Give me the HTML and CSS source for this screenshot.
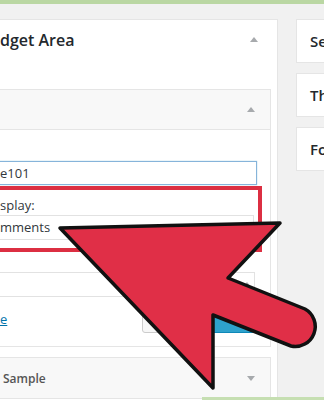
FILE: index.html
```html
<!DOCTYPE html>
<html>
<head>
<meta charset="utf-8">
<link rel="stylesheet" href="styles.css">
</head>
<body>
<div class="topbar"></div>
<div class="stage">
  <section class="area">
    <header class="area-head">
      <h2 class="area-title">dget Area</h2>
      <span class="caret caret-up"></span>
    </header>
    <div class="widget">
      <div class="widget-head">
        <span class="caret caret-up"></span>
      </div>
      <div class="widget-body">
        <div class="input">e101</div>
        <div class="highlight">
          <div class="label">splay:</div>
          <div class="select">mments</div>
        </div>
        <div class="field"><span class="caret caret-up"></span></div>
        <div class="actions">
          <a class="link" href="#">e</a>
          <div class="buttons">
            <span class="btn"></span>
            <span class="btn btn-primary"></span>
          </div>
        </div>
      </div>
    </div>
    <div class="widget">
      <div class="widget-head widget-head-closed">
        <h3 class="widget-title">Sample</h3>
        <span class="caret caret-down"></span>
      </div>
    </div>
  </section>
  <aside class="side">
    <div class="box"><h3 class="box-title">Search</h3></div>
    <div class="box"><h3 class="box-title">Theme</h3></div>
    <div class="box"><h3 class="box-title">Footer</h3></div>
  </aside>
</div>
<div class="greenbar"></div>
<svg class="arrow" width="324" height="400" viewBox="0 0 324 400">
  <path d="M60,228 L280,223 L228,278 L305,309 A20,20 0 0 1 291,346 L213,315 L213,388 Z" fill="#e02f47" stroke="#111" stroke-width="3.5" stroke-linejoin="round"/>
</svg>
</body>
</html>
```
FILE: styles.css
```css
html, body {
  margin: 0;
  padding: 0;
  overflow: hidden;
}
body {
  width: 324px;
  height: 400px;
  position: relative;
  background: #f1f1f1;
  font-family: "Open Sans", "DejaVu Sans", sans-serif;
  color: #23282d;
}
.topbar {
  height: 4px;
  background: #bad7a3;
}
.stage {
  display: flex;
  align-items: flex-start;
  gap: 18px;
  margin-left: -60px;
  padding-top: 15px;
}
.area {
  flex: none;
  width: 338px;
  min-height: 400px;
  box-sizing: border-box;
  background: #fff;
  border: 1px solid #e5e5e5;
}
.area-head {
  display: flex;
  justify-content: space-between;
  align-items: flex-start;
  height: 69px;
  box-sizing: border-box;
  padding: 0 19px 0 59px;
}
.area-title {
  margin: 9px 0 0;
  font-size: 16px;
  line-height: 22px;
  font-weight: 600;
}
.area-head .caret {
  margin-top: 17px;
}
.caret {
  display: block;
  width: 0;
  height: 0;
  border-left: 4px solid transparent;
  border-right: 4px solid transparent;
}
.caret-up {
  border-bottom: 5px solid #a7aaad;
}
.caret-down {
  border-top: 5px solid #a7aaad;
}
.widget {
  margin: 0 6px 0 9px;
  border: 1px solid #e5e5e5;
  background: #fff;
}
.widget + .widget {
  margin-top: 10px;
}
.widget-head {
  display: flex;
  justify-content: flex-end;
  align-items: center;
  height: 40px;
  box-sizing: border-box;
  padding-right: 15px;
  background: #f8f8f8;
  border-bottom: 1px solid #e5e5e5;
}
.widget-head-closed {
  justify-content: space-between;
  padding-left: 52px;
  border-bottom: 0;
}
.widget-title {
  margin: 0;
  font-size: 12px;
  font-weight: 600;
  color: #555;
}
.widget-body {
  padding: 31px 13px 13px 30px;
  font-size: 13px;
  color: #32373c;
}
.input {
  height: 24px;
  box-sizing: border-box;
  border: 1px solid #86b4da;
  padding-left: 18px;
  line-height: 22px;
  box-shadow: 0 0 1px rgba(30, 140, 190, .5);
}
.highlight {
  margin: 1px -5px 0 0;
  border: 4px solid #dc2f42;
  padding: 6px 4px 8px 15px;
}
.label {
  line-height: 19px;
}
.select {
  margin-left: -15px;
  padding-left: 15px;
  height: 25px;
  box-sizing: border-box;
  line-height: 23px;
  border-top: 1px solid #e2e2e2;
  border-bottom: 1px solid #e2e2e2;
  border-right: 1px solid #e2e2e2;
}
.field {
  display: flex;
  justify-content: flex-end;
  align-items: center;
  margin: 20px 2px 0 0;
  height: 25px;
  box-sizing: border-box;
  border: 1px solid #e2e2e2;
  border-left: 0;
  padding-right: 3px;
}
.actions {
  display: flex;
  justify-content: space-between;
  align-items: center;
  margin-top: 8px;
}
.link {
  margin-left: 19px;
  color: #0073aa;
  text-decoration: underline;
}
.buttons {
  display: flex;
  gap: 6px;
}
.btn {
  display: block;
  width: 56px;
  height: 28px;
  box-sizing: border-box;
  border: 1px solid #ccc;
  border-radius: 3px;
  background: #f7f7f7;
}
.btn-primary {
  width: 53px;
  background: #2ea2cc;
  border-color: #0e88b8;
}
.side {
  flex: none;
  width: 200px;
  display: flex;
  flex-direction: column;
  gap: 10px;
}
.box {
  height: 44px;
  box-sizing: border-box;
  background: #fff;
  border: 1px solid #e5e5e5;
  padding-left: 13px;
  display: flex;
  align-items: center;
}
.box-title {
  margin: 0;
  font-size: 15px;
  font-weight: 600;
}
.greenbar {
  position: absolute;
  left: 202px;
  top: 397px;
  width: 122px;
  height: 3px;
  background: #c6dfb2;
}
.arrow {
  position: absolute;
  left: 0;
  top: 0;
  pointer-events: none;
}
```
